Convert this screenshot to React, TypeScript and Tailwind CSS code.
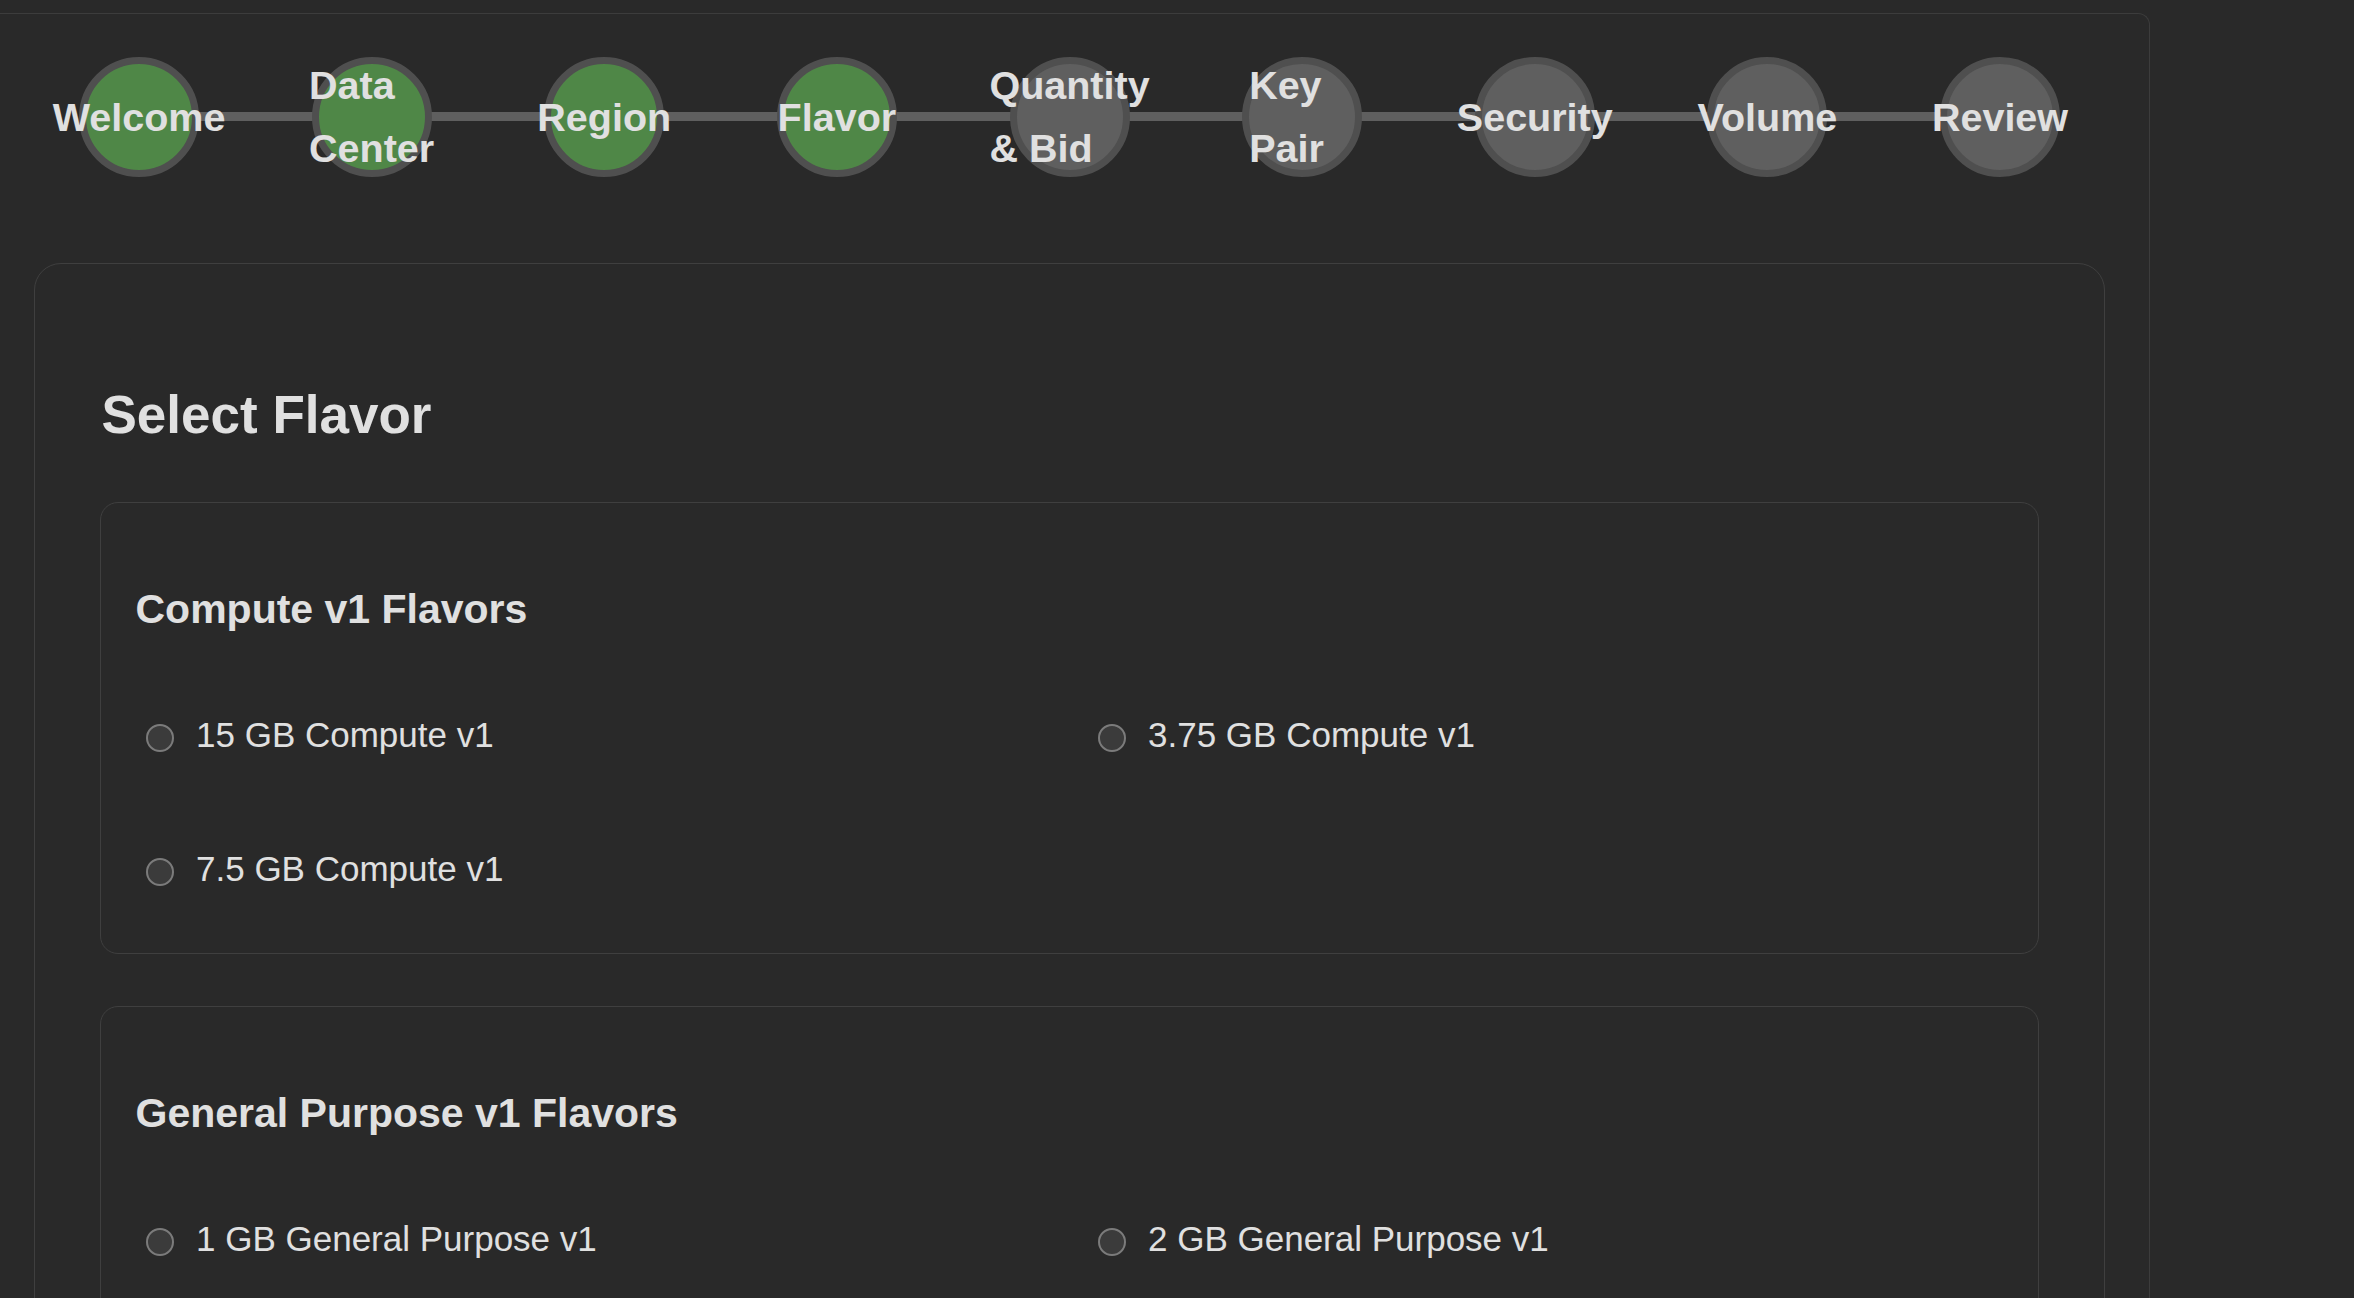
import React from "react";

type Step = { label: string; done: boolean };

const steps: Step[] = [
  { label: "Welcome", done: true },
  { label: "Data Center", done: true },
  { label: "Region", done: true },
  { label: "Flavor", done: true },
  { label: "Quantity & Bid", done: false },
  { label: "Key Pair", done: false },
  { label: "Security", done: false },
  { label: "Volume", done: false },
  { label: "Review", done: false },
];

const groups: { title: string; items: string[] }[] = [
  {
    title: "Compute v1 Flavors",
    items: ["15 GB Compute v1", "3.75 GB Compute v1", "7.5 GB Compute v1"],
  },
  {
    title: "General Purpose v1 Flavors",
    items: ["1 GB General Purpose v1", "2 GB General Purpose v1"],
  },
];

function Radio({ label }: { label: string }) {
  return (
    <label className="flex h-[40px] items-center">
      <span className="ml-[12px] mr-[22px] mt-[6px] h-[28px] w-[28px] shrink-0 rounded-full border-2 border-[#7b7b7b] bg-[#3b3b3b]" />
      <span className="whitespace-nowrap text-[35px] leading-[40px] text-[#e0e0e0]">{label}</span>
    </label>
  );
}

export default function App() {
  return (
    <div className="h-screen overflow-hidden bg-[#292929] pt-[13px] font-['Liberation_Sans',Arial,sans-serif]">
      <div className="-ml-[20px] w-[2170px] rounded-tr-[12px] border-t border-r border-[#3c3c3c] pb-[40px] pl-[54px]">
        {/* Stepper */}
        <div className="relative mt-[43px] flex w-[2071px] justify-between px-[45px]">
          <div className="absolute left-[105px] right-[105px] top-[55px] h-[9px] bg-[#5f5f5f]" />
          {steps.map((s) => (
            <div
              key={s.label}
              className={
                s.done
                  ? "relative z-10 flex h-[120px] w-[120px] items-center justify-center rounded-full border-[7px] border-[#4f4f4f] bg-[#4f8747]"
                  : "relative z-10 flex h-[120px] w-[120px] items-center justify-center rounded-full border-[7px] border-[#4f4f4f] bg-[#5f5f5f]"
              }
            >
              <div className="text-[39.5px] font-bold leading-[63px] text-[#e0e0e0]">{s.label}</div>
            </div>
          ))}
        </div>

        {/* Main card */}
        <div className="mt-[86px] w-[2071px] rounded-[27px] border border-[#3f3f3f] px-[65px] pb-[60px] pt-[121px]">
          <h2 className="pl-[1.5px] text-[53px] font-bold leading-[60px] text-[#e0e0e0]">Select Flavor</h2>
          <div className="mt-[57px] flex flex-col gap-[52px]">
            {groups.map((g) => (
              <div key={g.title} className="rounded-[18px] border border-[#3f3f3f] px-[33px] pb-[64px] pt-[83px]">
                <h3 className="pl-[1.5px] text-[41px] font-bold leading-[46px] text-[#e0e0e0]">{g.title}</h3>
                <div className="mt-[83px] grid grid-cols-2 gap-x-[33px] gap-y-[94px]">
                  {g.items.map((it) => (
                    <Radio key={it} label={it} />
                  ))}
                </div>
              </div>
            ))}
          </div>
        </div>
      </div>
    </div>
  );
}
